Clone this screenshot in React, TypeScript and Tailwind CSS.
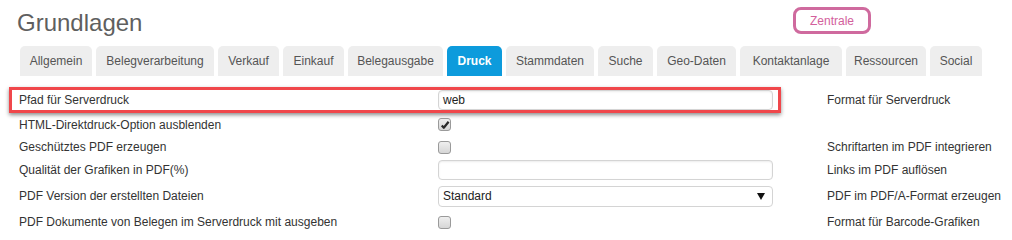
import React from 'react';

const tabs = [
  { label: 'Allgemein', w: 'w-[72px]' },
  { label: 'Belegverarbeitung', w: 'w-[118px]' },
  { label: 'Verkauf', w: 'w-[61px]' },
  { label: 'Einkauf', w: 'w-[61px]' },
  { label: 'Belegausgabe', w: 'w-[95px]' },
  { label: 'Druck', w: 'w-[55px]', active: true },
  { label: 'Stammdaten', w: 'w-[88px]' },
  { label: 'Suche', w: 'w-[55px]' },
  { label: 'Geo-Daten', w: 'w-[79px]' },
  { label: 'Kontaktanlage', w: 'w-[102px]' },
  { label: 'Ressourcen', w: 'w-[80px]' },
  { label: 'Social', w: 'w-[52px]' },
];

function Checkbox({ checked = false }: { checked?: boolean }) {
  return (
    <div className="w-[13px] h-[13px] rounded-[3px] border border-[#9a9a9a] bg-linear-to-b from-[#efefef] to-[#d6d6d6] flex items-center justify-center">
      {checked && (
        <svg width="10" height="10" viewBox="0 0 10 10">
          <path d="M1.8 5.6 L3.8 7.8 L8.6 1.8" fill="none" stroke="#2a2a2a" strokeWidth="2.2" strokeLinejoin="round" />
        </svg>
      )}
    </div>
  );
}

function TextInput({ value = '' }: { value?: string }) {
  return (
    <div className="w-[335px] h-[20px] rounded-[4px] border border-[#d4d4d4] bg-white shadow-[inset_0_1px_2px_rgba(0,0,0,0.08)] flex items-center pl-[4px] text-[12px] text-[#222]">
      {value}
    </div>
  );
}

function Row({ label, h, right, children }: { label: string; h: string; right?: string; children: React.ReactNode }) {
  return (
    <div className={`flex items-center ${h}`}>
      <div className="w-[772px] flex items-center pl-[10px]">
        <div className="w-[419px] text-[12px] text-[#333]">{label}</div>
        <div className="w-[335px] flex items-center">{children}</div>
      </div>
      {right && <div className="ml-[46px] text-[12px] text-[#333]">{right}</div>}
    </div>
  );
}

export default function App() {
  return (
    <div className="w-[1012px] h-[240px] bg-white overflow-hidden font-['Liberation_Sans',Arial,sans-serif]">
      {/* Header */}
      <div className="h-[46px] pt-[7px] w-[871px] flex items-start justify-between pl-[17px]">
        <h1 className="mt-[2px] text-[24px] leading-[28px] text-[#5f5f5f] font-normal">Grundlagen</h1>
        <button className="w-[78px] h-[27px] rounded-[8px] border-[3px] border-[#cf6a9e] text-[12px] text-[#d3609c] bg-white">
          Zentrale
        </button>
      </div>

      {/* Tabs */}
      <div className="flex gap-[4px] pl-[20px] h-[30px]">
        {tabs.map((t) => (
          <div
            key={t.label}
            className={`${t.w} h-[30px] rounded-t-[5px] flex items-center justify-center text-[12px] ${
              t.active ? 'bg-[#0d9bdc] text-white font-bold' : 'bg-[#eeeeee] text-[#555]'
            }`}
          >
            {t.label}
          </div>
        ))}
      </div>

      {/* Form */}
      <div className="mt-[11px] pl-[9px]">
        <div className="flex items-center h-[26px]">
          <div className="w-[772px] h-[26px] border-[3px] border-[#f0474b] shadow-[0_2px_4px_rgba(0,0,0,0.45)] flex items-center pl-[7px]">
            <div className="w-[419px] text-[12px] text-[#333]">Pfad für Serverdruck</div>
            <TextInput value="web" />
          </div>
          <div className="ml-[46px] text-[12px] text-[#333]">Format für Serverdruck</div>
        </div>

        <Row label="HTML-Direktdruck-Option ausblenden" h="h-[23px]">
          <Checkbox checked />
        </Row>
        <Row label="Geschütztes PDF erzeugen" h="h-[22px]" right="Schriftarten im PDF integrieren">
          <Checkbox />
        </Row>
        <Row label="Qualität der Grafiken in PDF(%)" h="h-[24px]" right="Links im PDF auflösen">
          <TextInput />
        </Row>
        <Row label="PDF Version der erstellten Dateien" h="h-[28px]" right="PDF im PDF/A-Format erzeugen">
          <div className="w-[335px] h-[21px] rounded-[4px] border border-[#d4d4d4] bg-white flex items-center justify-between pl-[4px] pr-[7px] text-[12px] text-[#222]">
            <span>Standard</span>
            <svg width="8" height="7" viewBox="0 0 8 7">
              <path d="M0 0 H8 L4 7 Z" fill="#111" />
            </svg>
          </div>
        </Row>
        <Row label="PDF Dokumente von Belegen im Serverdruck mit ausgeben" h="h-[24px]" right="Format für Barcode-Grafiken">
          <Checkbox />
        </Row>
      </div>
    </div>
  );
}
